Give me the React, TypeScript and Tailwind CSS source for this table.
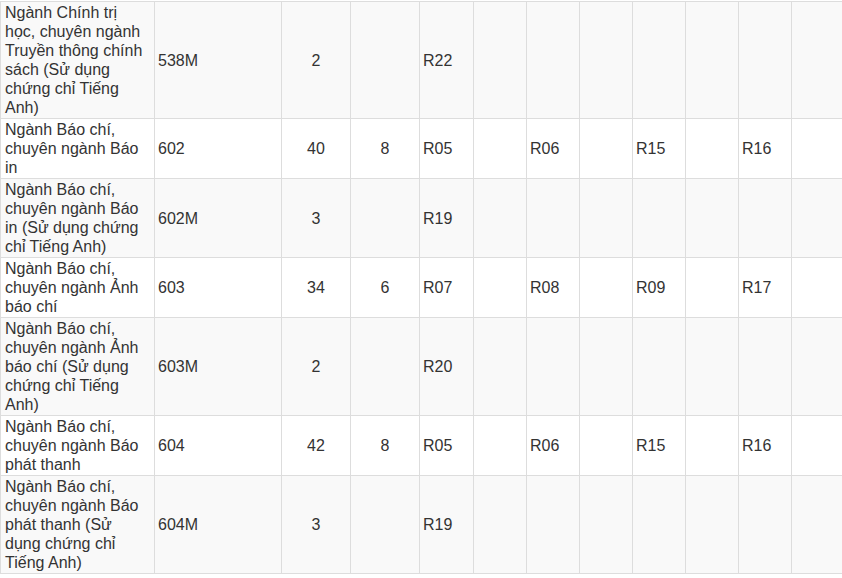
import React from "react";

type Row = { name: string; code: string; a: string; b: string; r: string[]; bg: string };

const rows: Row[] = [
  { name: "Ngành Chính trị học, chuyên ngành Truyền thông chính sách (Sử dụng chứng chỉ Tiếng Anh)", code: "538M", a: "2", b: "", r: ["R22"], bg: "bg-[#f9f9f9]" },
  { name: "Ngành Báo chí, chuyên ngành Báo in", code: "602", a: "40", b: "8", r: ["R05", "R06", "R15", "R16"], bg: "bg-white" },
  { name: "Ngành Báo chí, chuyên ngành Báo in (Sử dụng chứng chỉ Tiếng Anh)", code: "602M", a: "3", b: "", r: ["R19"], bg: "bg-[#f9f9f9]" },
  { name: "Ngành Báo chí, chuyên ngành Ảnh báo chí", code: "603", a: "34", b: "6", r: ["R07", "R08", "R09", "R17"], bg: "bg-white" },
  { name: "Ngành Báo chí, chuyên ngành Ảnh báo chí (Sử dụng chứng chỉ Tiếng Anh)", code: "603M", a: "2", b: "", r: ["R20"], bg: "bg-[#f9f9f9]" },
  { name: "Ngành Báo chí, chuyên ngành Báo phát thanh", code: "604", a: "42", b: "8", r: ["R05", "R06", "R15", "R16"], bg: "bg-white" },
  { name: "Ngành Báo chí, chuyên ngành Báo phát thanh (Sử dụng chứng chỉ Tiếng Anh)", code: "604M", a: "3", b: "", r: ["R19"], bg: "bg-[#f9f9f9]" },
];

const td = "border border-[#ddd] px-[3px] py-px align-middle";

export default function App() {
  return (
    <div className="w-[842px] h-[578px] overflow-hidden bg-white pt-px">
      <table
        className="table-fixed border-collapse w-[845px] text-[16px] leading-[19px] text-[#333]"
        style={{ fontFamily: '"Liberation Sans", Arial, sans-serif' }}
      >
        <colgroup>
          <col className="w-[154px]" />
          <col className="w-[127px]" />
          <col className="w-[69px]" />
          <col className="w-[69px]" />
          <col className="w-[54px]" />
          <col className="w-[53px]" />
          <col className="w-[53px]" />
          <col className="w-[53px]" />
          <col className="w-[53px]" />
          <col className="w-[53px]" />
          <col className="w-[53px]" />
          <col className="w-[54px]" />
        </colgroup>
        <tbody>
          {rows.map((row, i) => {
            const rs = [row.r[0] ?? "", "", row.r[1] ?? "", "", row.r[2] ?? "", "", row.r[3] ?? "", ""];
            return (
              <tr key={i} className={row.bg}>
                <td className="border border-[#ddd] pl-[4px] pr-[6px] py-px align-middle">{row.name}</td>
                <td className={td}>{row.code}</td>
                <td className={`${td} text-center`}>{row.a}</td>
                <td className={`${td} text-center`}>{row.b}</td>
                {rs.map((v, j) => (
                  <td key={j} className={td}>{v}</td>
                ))}
              </tr>
            );
          })}
        </tbody>
      </table>
    </div>
  );
}
